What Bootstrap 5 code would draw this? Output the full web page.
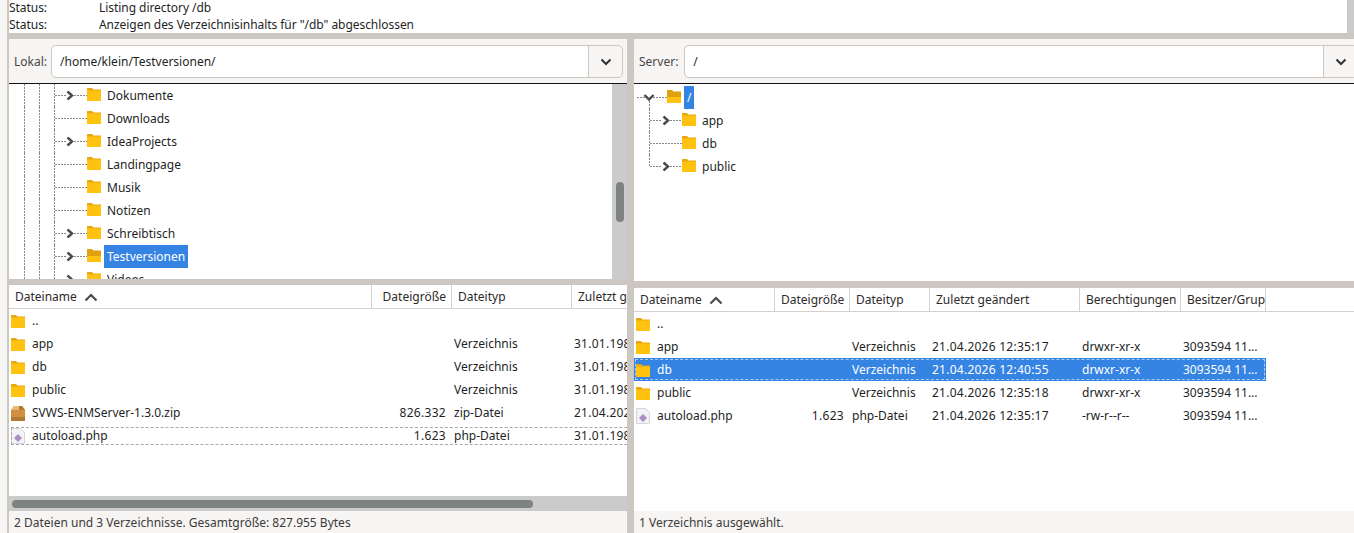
<!DOCTYPE html>
<html lang="de">
<head>
    <meta charset="UTF-8">
    <title>FileZilla</title>
    <link href="https://cdn.jsdelivr.net/npm/bootstrap@5.3.0/dist/css/bootstrap.min.css" rel="stylesheet">
    <style>
        html, body { height: 533px; overflow: hidden; }
        body { background: #cdc7c2; font-family: "Noto Sans", "Liberation Sans", sans-serif; font-size: 12px; color: #241f1f; padding-left: 9px; position: relative; }
        .edge-strip { position: absolute; left: 0; top: 0; width: 7px; height: 533px; background: #f6f5f4; }
        .log-box { height: 33px; width: 1338px; background: #fff; overflow: hidden; margin-bottom: 6px; padding-top: 0; letter-spacing: -.05px; }
        .log-line { height: 17px; line-height: 15px; display: flex; }
        .log-line span:first-child { width: 90px; }
        .log-scroll { position: absolute; right: 0; top: 0; width: 7px; height: 33px; background: #cbcbcb; }
        .panes { display: grid; grid-template-columns: 618px 720px; column-gap: 7px; height: 494px; }
        .pane { display: flex; flex-direction: column; min-width: 0; overflow: hidden; }
        .site-bar { height: 45px; flex: none; background: #f6f5f4; border-bottom: 1px solid #111; padding: 6px 4px 5px 5px; gap: 4px; color: #4a4644; }
        .site-bar .input-group { flex: 1; height: 33px; flex-wrap: nowrap; }
        .site-bar .form-control { height: 33px; font-size: 12px; padding: 0 8px; color: #241f1f; border-color: #cdc7c2; border-radius: 5px 0 0 5px; box-shadow: none; }
        .drop-btn { width: 35px; padding: 0; background: #f6f5f4; border: 1px solid #cdc7c2; border-radius: 0 5px 5px 0; display: flex; align-items: center; justify-content: center; }
        .server-bar { padding-right: 0; margin-right: -4px; gap: 6px; }
        .tree-wrap { background: #fff; overflow: hidden; flex: none; }
        .tree-l { height: 195px; display: flex; }
        .tree-r { height: 197px; padding-top: 2px; }
        .tree-rows { flex: 1; overflow: hidden; padding-left: 15px; }
        .tree-row { height: 23px; display: flex; align-items: center; }
        .tree-row svg { flex: none; display: block; }
        .tree-row svg + svg { margin-top: -3px; }
        .tree-label { padding: 0 3px; height: 23px; line-height: 23px; margin-left: 3px; }
        .tree-sel { background: #3584e4; color: #fff; }
        .vscroll { width: 15px; background: #cbcbcb; flex: none; padding: 98px 3px 0 4px; }
        .vscroll-thumb { height: 40px; width: 8px; border-radius: 4px; background: #7e8281; }
        .sash-l { height: 6px; flex: none; }
        .sash-r { height: 7px; flex: none; }
        .list-top { height: 24px; flex: none; background: #fff; border-bottom: 1px solid #d5d0cc; overflow: hidden; }
        .list-head { display: grid; line-height: 23px; height: 23px; }
        .list-head > div { padding-left: 6px; border-right: 1px solid #d5d0cc; white-space: nowrap; overflow: hidden; color: #2e2a2a; }
        .list-head > .head-size { text-align: right; padding-right: 5px; }
        .grid-l { grid-template-columns: 363px 80px 120px 200px; width: 763px; }
        .grid-r { grid-template-columns: 141px 75px 80px 150px 101px 85px; width: 632px; }
        .list-body { flex: 1; background: #fff; overflow: hidden; min-height: 0; }
        .file-row { height: 23px; line-height: 23px; display: grid; white-space: nowrap; position: relative; }
        .file-row > div { overflow: hidden; padding-left: 2px; }
        .file-row > div:nth-child(4) { letter-spacing: .25px; }
        .file-row > .cell-name { display: flex; align-items: center; padding-left: 2px; gap: 7px; }
        .file-row > .cell-size { text-align: right; padding: 0 6px 0 0; letter-spacing: .3px; }
        .cell-name svg { flex: none; }
        .row-sel { background: #3584e4; color: #fff; }
        .row-sel::after, .row-focus::after { content: ""; position: absolute; pointer-events: none; }
        .row-sel::after { inset: 1px; border: 1px dashed #a9cbf3; }
        .row-focus::after { inset: 3px 0 2px 2px; border: 1px dashed #a8a8a8; }
        .hscroll { height: 15px; flex: none; background: #cbcbcb; padding: 4px 0 0 3px; }
        .hscroll-thumb { width: 521px; height: 8px; border-radius: 4px; background: #7e8281; }
        .state-bar { height: 22px; line-height: 23px; flex: none; background: #f6f5f4; padding-left: 5px; color: #3d3a38; }
    </style>
</head>
<body>
    <svg width="0" height="0" class="d-block">
        <symbol id="folder" viewBox="0 0 14 14">
            <path d="M0 1.5 Q0 1 .5 1 H5 L6.5 2.5 H14 V14 H0 Z" fill="#e8a70e"/>
            <path d="M0 3.5 H14 V13.5 Q14 14 13.5 14 H.5 Q0 14 0 13.5 Z" fill="#ffc30f"/>
        </symbol>
        <symbol id="folder-open" viewBox="0 0 14 14">
            <path d="M0 1.5 Q0 1 .5 1 H5 L6.5 2.5 H14 V14 H0 Z" fill="#e0a010"/>
            <path d="M0 8 H14 V13.5 Q14 14 13.5 14 H.5 Q0 14 0 13.5 Z" fill="#ffc30f"/>
        </symbol>
        <symbol id="zip" viewBox="0 0 14 16">
            <path d="M0 5 L3 1 H11 L14 5 V15 Q14 16 13 16 H1 Q0 16 0 15 Z" fill="#cf9140"/>
            <path d="M0 5 L3 1 H8 V5 Z" fill="#e8b878"/>
            <path d="M8 1 H11 L14 5 H8 Z" fill="#b57a2c"/>
            <rect y="12" width="14" height="4" fill="#b07a35"/>
        </symbol>
        <symbol id="php" viewBox="0 0 14 16">
            <path d="M.5 .5 H9.5 L13.5 4.5 V15 Q13.5 15.5 13 15.5 H1 Q.5 15.5 .5 15 Z" fill="#f3f2f5" stroke="#d5d3d8"/>
            <path d="M7 6 L11 10 L7 14 L3 10 Z" fill="#a78fc0"/>
        </symbol>
        <symbol id="chev-r" viewBox="0 0 8 10">
            <path d="M1.5 1 L6 5 L1.5 9" fill="none" stroke="#4a4a4a" stroke-width="2.4"/>
        </symbol>
    </svg>
    <div class="edge-strip"></div>

    <div class="log-box">
        <div class="log-line"><span>Status:</span><span>Listing directory /db</span></div>
        <div class="log-line"><span>Status:</span><span>Anzeigen des Verzeichnisinhalts für "/db" abgeschlossen</span></div>
    </div>
    <div class="log-scroll"></div>

    <div class="panes">
        <!-- lokal -->
        <div class="pane">
            <div class="site-bar d-flex align-items-center">
                <span>Lokal:</span>
                <div class="input-group">
                    <input class="form-control" type="text" value="/home/klein/Testversionen/">
                    <button class="drop-btn" type="button"><svg width="12" height="8" viewBox="0 0 12 8"><path d="M1.5 1.5 L6 6 L10.5 1.5" fill="none" stroke="#333" stroke-width="2"/></svg></button>
                </div>
            </div>
            <div class="tree-wrap tree-l">
                <div class="tree-rows">
                    <div class="tree-row"><svg width="63" height="23"><path d="M.5 0V23M15.5 0V23M30.5 0V23M31 11.5H43M50 11.5H63" stroke="#888" stroke-dasharray="2 1"/><use href="#chev-r" x="42" y="6.5" width="8" height="10"/></svg><svg width="14" height="14"><use href="#folder"/></svg><span class="tree-label">Dokumente</span></div>
                    <div class="tree-row"><svg width="63" height="23"><path d="M.5 0V23M15.5 0V23M30.5 0V23M31 11.5H63" stroke="#888" stroke-dasharray="2 1"/></svg><svg width="14" height="14"><use href="#folder"/></svg><span class="tree-label">Downloads</span></div>
                    <div class="tree-row"><svg width="63" height="23"><path d="M.5 0V23M15.5 0V23M30.5 0V23M31 11.5H43M50 11.5H63" stroke="#888" stroke-dasharray="2 1"/><use href="#chev-r" x="42" y="6.5" width="8" height="10"/></svg><svg width="14" height="14"><use href="#folder"/></svg><span class="tree-label">IdeaProjects</span></div>
                    <div class="tree-row"><svg width="63" height="23"><path d="M.5 0V23M15.5 0V23M30.5 0V23M31 11.5H63" stroke="#888" stroke-dasharray="2 1"/></svg><svg width="14" height="14"><use href="#folder"/></svg><span class="tree-label">Landingpage</span></div>
                    <div class="tree-row"><svg width="63" height="23"><path d="M.5 0V23M15.5 0V23M30.5 0V23M31 11.5H63" stroke="#888" stroke-dasharray="2 1"/></svg><svg width="14" height="14"><use href="#folder"/></svg><span class="tree-label">Musik</span></div>
                    <div class="tree-row"><svg width="63" height="23"><path d="M.5 0V23M15.5 0V23M30.5 0V23M31 11.5H63" stroke="#888" stroke-dasharray="2 1"/></svg><svg width="14" height="14"><use href="#folder"/></svg><span class="tree-label">Notizen</span></div>
                    <div class="tree-row"><svg width="63" height="23"><path d="M.5 0V23M15.5 0V23M30.5 0V23M31 11.5H43M50 11.5H63" stroke="#888" stroke-dasharray="2 1"/><use href="#chev-r" x="42" y="6.5" width="8" height="10"/></svg><svg width="14" height="14"><use href="#folder"/></svg><span class="tree-label">Schreibtisch</span></div>
                    <div class="tree-row"><svg width="63" height="23"><path d="M.5 0V23M15.5 0V23M30.5 0V23M31 11.5H43M50 11.5H63" stroke="#888" stroke-dasharray="2 1"/><use href="#chev-r" x="42" y="6.5" width="8" height="10"/></svg><svg width="14" height="14"><use href="#folder-open"/></svg><span class="tree-label tree-sel">Testversionen</span></div>
                    <div class="tree-row"><svg width="63" height="23"><path d="M.5 0V23M15.5 0V23M30.5 0V23M31 11.5H43M50 11.5H63" stroke="#888" stroke-dasharray="2 1"/><use href="#chev-r" x="42" y="6.5" width="8" height="10"/></svg><svg width="14" height="14"><use href="#folder"/></svg><span class="tree-label">Videos</span></div>
                </div>
                <div class="vscroll"><div class="vscroll-thumb"></div></div>
            </div>
            <div class="sash-l"></div>
            <div class="list-top"><div class="list-head grid-l">
                <div>Dateiname <svg class="ms-1" width="14" height="9" viewBox="0 0 14 9"><path d="M1.5 7.5 L7 2 L12.5 7.5" fill="none" stroke="#4a4a4a" stroke-width="2.2"/></svg></div>
                <div class="head-size">Dateigröße</div><div>Dateityp</div><div>Zuletzt geändert</div>
            </div></div>
            <div class="list-body">
                <div class="file-row grid-l"><div class="cell-name"><svg width="14" height="14"><use href="#folder"/></svg>..</div><div class="cell-size"></div><div></div><div></div></div>
                <div class="file-row grid-l"><div class="cell-name"><svg width="14" height="14"><use href="#folder"/></svg>app</div><div class="cell-size"></div><div>Verzeichnis</div><div>31.01.1980 00:00:00</div></div>
                <div class="file-row grid-l"><div class="cell-name"><svg width="14" height="14"><use href="#folder"/></svg>db</div><div class="cell-size"></div><div>Verzeichnis</div><div>31.01.1980 00:00:00</div></div>
                <div class="file-row grid-l"><div class="cell-name"><svg width="14" height="14"><use href="#folder"/></svg>public</div><div class="cell-size"></div><div>Verzeichnis</div><div>31.01.1980 00:00:00</div></div>
                <div class="file-row grid-l"><div class="cell-name"><svg width="14" height="16"><use href="#zip"/></svg>SVWS-ENMServer-1.3.0.zip</div><div class="cell-size">826.332</div><div>zip-Datei</div><div>21.04.2026 12:35:00</div></div>
                <div class="file-row grid-l row-focus"><div class="cell-name"><svg width="14" height="16"><use href="#php"/></svg>autoload.php</div><div class="cell-size">1.623</div><div>php-Datei</div><div>31.01.1980 00:00:00</div></div>
            </div>
            <div class="hscroll"><div class="hscroll-thumb"></div></div>
            <div class="state-bar">2 Dateien und 3 Verzeichnisse. Gesamtgröße: 827.955 Bytes</div>
        </div>

        <!-- server -->
        <div class="pane">
            <div class="site-bar server-bar d-flex align-items-center">
                <span>Server:</span>
                <div class="input-group">
                    <input class="form-control" type="text" value="/">
                    <button class="drop-btn" type="button"><svg width="12" height="8" viewBox="0 0 12 8"><path d="M1.5 1.5 L6 6 L10.5 1.5" fill="none" stroke="#333" stroke-width="2"/></svg></button>
                </div>
            </div>
            <div class="tree-wrap tree-r">
                <div class="tree-row"><svg width="33" height="23"><path d="M3 11.5H11M19 11.5H33M15.5 15V23" stroke="#888" stroke-dasharray="2 1"/><path d="M10.5 9 L15 13.5 L19.5 9" fill="none" stroke="#4a4a4a" stroke-width="2.4"/></svg><svg width="14" height="14"><use href="#folder-open"/></svg><span class="tree-label tree-sel">/</span></div>
                <div class="tree-row"><svg width="48" height="23"><path d="M15.5 0V23M16 11.5H28M36 11.5H48" stroke="#888" stroke-dasharray="2 1"/><use href="#chev-r" x="28" y="6.5" width="8" height="10"/></svg><svg width="14" height="14"><use href="#folder"/></svg><span class="tree-label">app</span></div>
                <div class="tree-row"><svg width="48" height="23"><path d="M15.5 0V23M16 11.5H48" stroke="#888" stroke-dasharray="2 1"/></svg><svg width="14" height="14"><use href="#folder"/></svg><span class="tree-label">db</span></div>
                <div class="tree-row"><svg width="48" height="23"><path d="M15.5 0V11.5M16 11.5H28M36 11.5H48" stroke="#888" stroke-dasharray="2 1"/><use href="#chev-r" x="28" y="6.5" width="8" height="10"/></svg><svg width="14" height="14"><use href="#folder"/></svg><span class="tree-label">public</span></div>
            </div>
            <div class="sash-r"></div>
            <div class="list-top"><div class="list-head grid-r">
                <div>Dateiname <svg class="ms-1" width="14" height="9" viewBox="0 0 14 9"><path d="M1.5 7.5 L7 2 L12.5 7.5" fill="none" stroke="#4a4a4a" stroke-width="2.2"/></svg></div>
                <div>Dateigröße</div><div>Dateityp</div><div>Zuletzt geändert</div><div>Berechtigungen</div><div>Besitzer/Gruppe</div>
            </div></div>
            <div class="list-body">
                <div class="file-row grid-r"><div class="cell-name"><svg width="14" height="14"><use href="#folder"/></svg>..</div><div class="cell-size"></div><div></div><div></div><div></div><div></div></div>
                <div class="file-row grid-r"><div class="cell-name"><svg width="14" height="14"><use href="#folder"/></svg>app</div><div class="cell-size"></div><div>Verzeichnis</div><div>21.04.2026 12:35:17</div><div>drwxr-xr-x</div><div>3093594 11...</div></div>
                <div class="file-row grid-r row-sel"><div class="cell-name"><svg width="14" height="14"><use href="#folder"/></svg>db</div><div class="cell-size"></div><div>Verzeichnis</div><div>21.04.2026 12:40:55</div><div>drwxr-xr-x</div><div>3093594 11...</div></div>
                <div class="file-row grid-r"><div class="cell-name"><svg width="14" height="14"><use href="#folder"/></svg>public</div><div class="cell-size"></div><div>Verzeichnis</div><div>21.04.2026 12:35:18</div><div>drwxr-xr-x</div><div>3093594 11...</div></div>
                <div class="file-row grid-r"><div class="cell-name"><svg width="14" height="16"><use href="#php"/></svg>autoload.php</div><div class="cell-size">1.623</div><div>php-Datei</div><div>21.04.2026 12:35:17</div><div>-rw-r--r--</div><div>3093594 11...</div></div>
            </div>
            <div class="state-bar">1 Verzeichnis ausgewählt.</div>
        </div>
    </div>
    <script src="https://cdn.jsdelivr.net/npm/bootstrap@5.3.0/dist/js/bootstrap.bundle.min.js"></script>
</body>
</html>
